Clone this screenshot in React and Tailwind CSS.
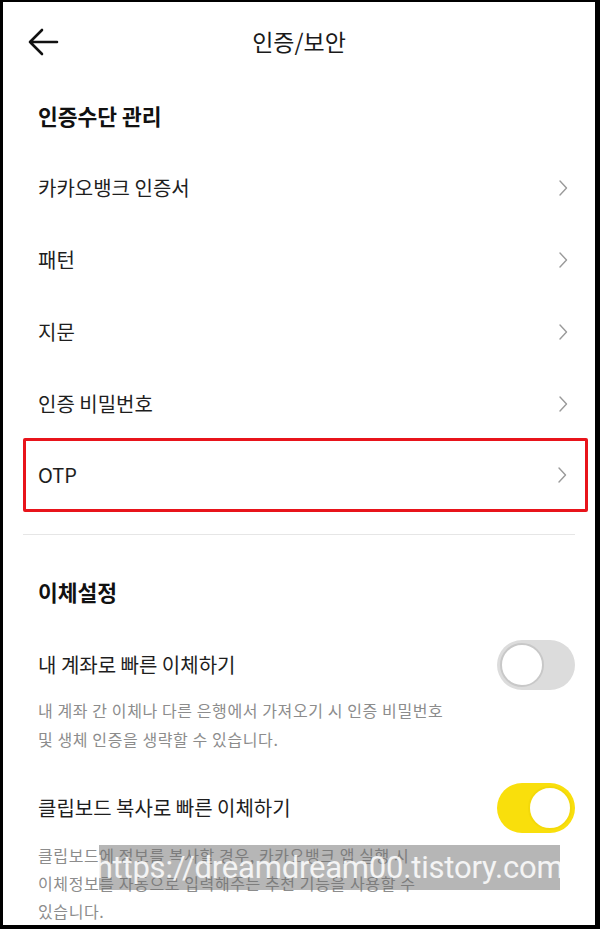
const FONT = { fontFamily: '"Noto Sans CJK KR", "Noto Sans", sans-serif' };

function Chevron() {
  return (
    <svg width="12" height="18" viewBox="0 0 12 18" fill="none" aria-hidden="true">
      <path d="M3 2l6.5 7L3 16" stroke="#9a9a9a" strokeWidth="1.4" strokeLinecap="round" strokeLinejoin="round" />
    </svg>
  );
}

function Toggle({ on }) {
  return (
    <div
      className={[
        'flex h-[50px] w-[78px] items-center rounded-full px-[3px]',
        on ? 'justify-end bg-[#f9df0c]' : 'justify-start bg-[#dcdcdc]',
      ].join(' ')}
    >
      <span
        className={[
          'h-[44px] w-[44px] rounded-full border-2 bg-white',
          on ? 'border-[#f3d90a]' : 'border-[#c8c8c8]',
        ].join(' ')}
      />
    </div>
  );
}

function MenuRow({ label }) {
  return (
    <div className="flex h-[72px] items-center justify-between pl-[35px] pr-[26px]">
      <span className="text-[20px] text-[#1e1e1e]">{label}</span>
      <Chevron />
    </div>
  );
}

export default function App() {
  return (
    <div
      style={FONT}
      className="relative h-[929px] w-[600px] overflow-hidden border-t-2 border-r-[5px] border-b-4 border-l-[3px] border-black bg-white"
    >
      {/* header */}
      <div className="relative flex h-[78px] items-center justify-center">
        <svg
          className="absolute left-[24px] top-[26px]"
          width="32"
          height="28"
          viewBox="0 0 32 28"
          fill="none"
          aria-hidden="true"
        >
          <path d="M30 14H3M15 2L3 14l12 12" stroke="#111" strokeWidth="2.6" strokeLinecap="round" strokeLinejoin="round" />
        </svg>
        <span className="text-[23px] text-[#1a1a1a]">인증/보안</span>
      </div>

      {/* 인증수단 관리 */}
      <div className="flex h-[72px] items-center pl-[35px]">
        <span className="text-[21.5px] font-bold text-[#111]">인증수단 관리</span>
      </div>
      <MenuRow label="카카오뱅크 인증서" />
      <MenuRow label="패턴" />
      <MenuRow label="지문" />
      <MenuRow label="인증 비밀번호" />
      <div className="-mt-[2px] ml-[20px] mr-[7px] flex h-[74px] items-center justify-between rounded-[2px] border-[3px] border-[#e8141b] pl-[12px] pr-[17px]">
        <span className="text-[20px] text-[#1e1e1e]">OTP</span>
        <Chevron />
      </div>

      <div className="ml-[20px] mr-[20px] mt-[22px] h-px bg-[#e6e6e6]" />

      {/* 이체설정 */}
      <div className="pl-[35px] pt-[44px] leading-[26px]">
        <span className="text-[21.5px] font-bold text-[#111]">이체설정</span>
      </div>

      <div className="mt-[33px] flex h-[50px] items-center justify-between pl-[35px] pr-[20px]">
        <span className="text-[20px] text-[#1e1e1e]">내 계좌로 빠른 이체하기</span>
        <Toggle on={false} />
      </div>
      <p className="mt-[6px] pl-[35px] text-[16px] leading-[29px] tracking-[0.6px] text-[#8c8c8c]">
        내 계좌 간 이체나 다른 은행에서 가져오기 시 인증 비밀번호
        <br />및 생체 인증을 생략할 수 있습니다.
      </p>

      <div className="mt-[29px] flex h-[50px] items-center justify-between pl-[35px] pr-[20px]">
        <span className="text-[20px] text-[#1e1e1e]">클립보드 복사로 빠른 이체하기</span>
        <Toggle on />
      </div>
      <p className="mt-[8px] pl-[35px] text-[16px] leading-[28px] tracking-[0.6px] text-[#8c8c8c]">
        클립보드에 정보를 복사할 경우, 카카오뱅크 앱 실행 시
        <br />
        이체정보를 자동으로 입력해주는 추천 기능을 사용할 수
        <br />
        있습니다.
      </p>

      {/* blog watermark */}
      <div className="absolute left-[96px] top-[843px] flex h-[45px] w-[461px] items-center justify-center bg-[rgba(110,110,110,0.5)]">
        <span
          className="text-[31px] leading-none tracking-[-0.2px] text-white/85"
          style={{ fontFamily: 'Roboto, "Noto Sans", sans-serif' }}
        >
          https://dreamdream00.tistory.com
        </span>
      </div>
    </div>
  );
}
